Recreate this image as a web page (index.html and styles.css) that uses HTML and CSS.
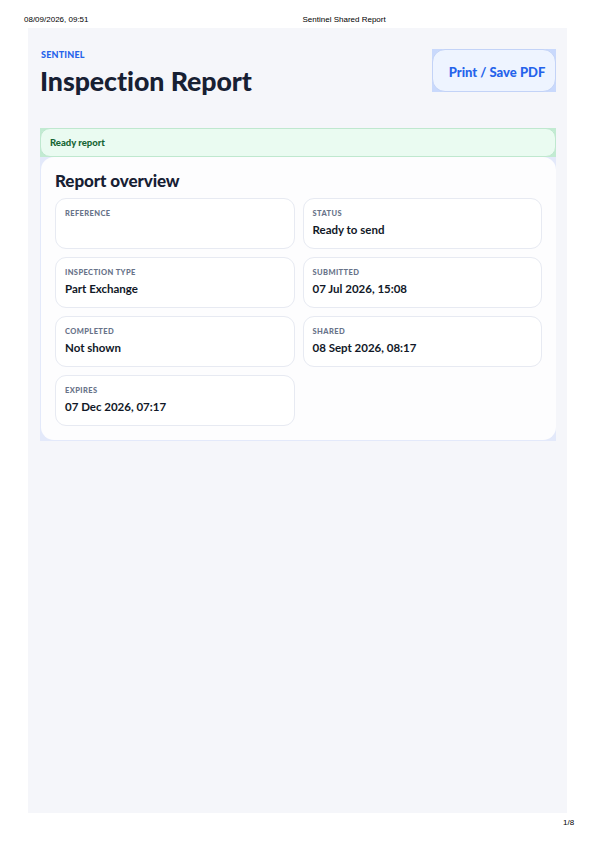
FILE: index.html
```html
<!DOCTYPE html>
<html lang="en">
<head>
<meta charset="utf-8">
<title>Sentinel Shared Report</title>
<link rel="stylesheet" href="styles.css">
</head>
<body>
<div class="print-header">
  <span class="print-date">08/09/2026, 09:51</span>
  <span class="print-title">Sentinel Shared Report</span>
</div>
<div class="sheet">
  <header class="top">
    <div class="brand">
      <div class="eyebrow">SENTINEL</div>
      <h1 class="title">Inspection Report</h1>
    </div>
    <div class="btn-frame">
      <button class="print-btn">Print / Save PDF</button>
    </div>
  </header>

  <div class="banner-frame">
    <div class="banner">Ready report</div>
  </div>

  <div class="card-frame">
    <section class="card">
      <h2 class="card-title">Report overview</h2>
      <div class="grid">
        <div class="cell"><div class="label">Reference</div><div class="value"></div></div>
        <div class="cell"><div class="label">Status</div><div class="value">Ready to send</div></div>
        <div class="cell"><div class="label">Inspection type</div><div class="value">Part Exchange</div></div>
        <div class="cell"><div class="label">Submitted</div><div class="value">07 Jul 2026, 15:08</div></div>
        <div class="cell"><div class="label">Completed</div><div class="value">Not shown</div></div>
        <div class="cell"><div class="label">Shared</div><div class="value">08 Sept 2026, 08:17</div></div>
        <div class="cell"><div class="label">Expires</div><div class="value">07 Dec 2026, 07:17</div></div>
      </div>
    </section>
  </div>
</div>
<div class="print-footer">1/8</div>
</body>
</html>
```

FILE: styles.css
```css
* { box-sizing: border-box; }
html, body { margin: 0; padding: 0; background: #ffffff; }
body {
  width: 595px;
  height: 842px;
  font-family: Lato, "Noto Sans", sans-serif;
  color: #172033;
}

.print-header {
  height: 28px;
  display: flex;
  align-items: flex-start;
  padding: 15px 0 0 24px;
  font-family: "Liberation Sans", Arial, sans-serif;
  font-size: 8px;
  color: #000;
  line-height: 10px;
}
.print-title { margin-left: 214px; }

.sheet {
  margin-left: 28px;
  width: 539px;
  height: 785px;
  background: #f5f6fa;
  padding: 21px 11px 12px 12px;
}

.top {
  display: flex;
  justify-content: space-between;
  align-items: flex-start;
  height: 79px;
}
.eyebrow {
  font-size: 9px;
  font-weight: 900;
  color: #2563eb;
  line-height: 12px;
  letter-spacing: 0.2px;
  margin-left: 1px;
}
.title {
  margin: 2px 0 0;
  font-size: 26.7px;
  font-weight: 900;
  line-height: 36px;
  color: #172033;
  letter-spacing: -0.05px;
}

.btn-frame {
  background: #c9d9fc;
  width: 124px;
  height: 43px;
}
.print-btn {
  width: 124px;
  height: 43px;
  border: 1px solid #c3d3f7;
  border-radius: 13px;
  background: #eef4ff;
  color: #2563eb;
  font-family: Lato, sans-serif;
  font-size: 13px;
  font-weight: 900;
  padding: 2px 0 0 6px;
  cursor: pointer;
}

.banner-frame {
  background: #c2ebd2;
  height: 29px;
}
.banner {
  height: 29px;
  background: #eafbf1;
  border: 1px solid #bfe8cf;
  border-radius: 10px;
  padding: 0 9px;
  display: flex;
  align-items: center;
  font-size: 9.5px;
  font-weight: 900;
  color: #166534;
}

.card-frame {
  background: #e3e9fa;
  padding: 0 0 1px 1px;
}
.card {
  background: #fdfdfe;
  border-radius: 13px;
  padding: 12px 14px 14px 14px;
}
.card-title {
  margin: 0 0 5px;
  font-size: 17px;
  font-weight: 900;
  line-height: 24px;
  color: #172033;
  letter-spacing: -0.1px;
}

.grid {
  display: grid;
  grid-template-columns: 1fr 1fr;
  gap: 8.5px 8px;
}
.cell {
  height: 50.5px;
  border: 1px solid #e7eaf2;
  border-radius: 11px;
  background: #ffffff;
  padding: 10px 9px 0;
}
.label {
  font-size: 7.5px;
  font-weight: 900;
  letter-spacing: 0.4px;
  text-transform: uppercase;
  color: #687389;
  line-height: 10px;
}
.value {
  margin-top: 3px;
  font-size: 11.5px;
  font-weight: 700;
  color: #111827;
  line-height: 16px;
}

.print-footer {
  font-family: "Liberation Sans", Arial, sans-serif;
  font-size: 8px;
  line-height: 10px;
  color: #000;
  padding: 5px 0 0 563px;
}
```
